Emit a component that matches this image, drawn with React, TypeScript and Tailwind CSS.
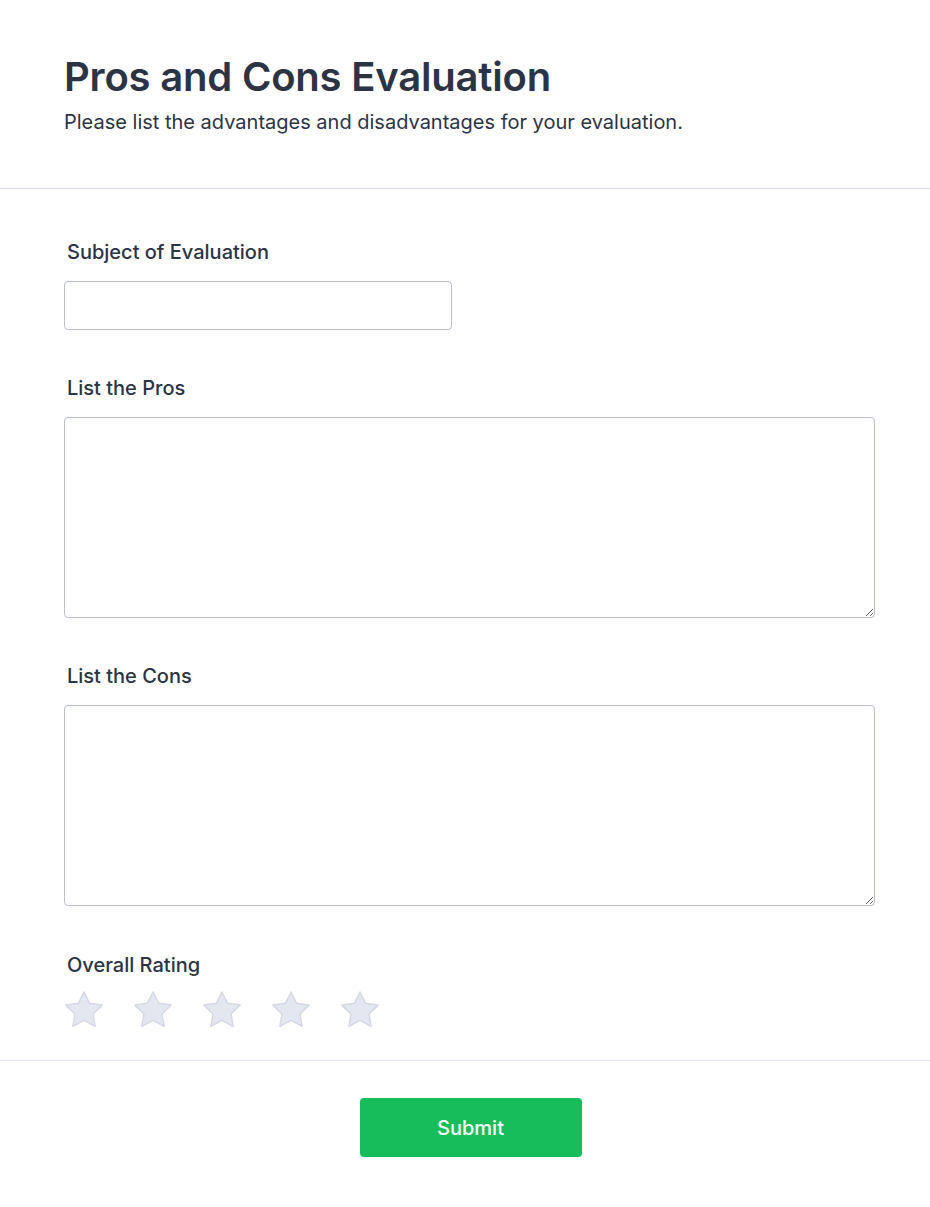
import React from "react";

const Star = () => (
  <svg width="46" height="46" viewBox="0 0 24 24" className="block">
    <path
      d="M12 2.6l2.9 5.9 6.5.95-4.7 4.6 1.1 6.45L12 17.45l-5.8 3.05 1.1-6.45-4.7-4.6 6.5-.95z"
      fill="#e5e7f0"
      stroke="#d6d9e4"
      strokeWidth="0.8"
      strokeLinejoin="round"
    />
  </svg>
);

export default function App() {
  return (
    <div className="min-h-[1207px] bg-white text-[#2c3345]" style={{ fontFamily: "Inter, 'Noto Sans', sans-serif" }}>
      <div className="px-16 pt-[52px] pb-[54px] border-b border-[#dadaea]">
        <h1 className="text-[40px] leading-[50px] font-semibold tracking-[-0.2px]">Pros and Cons Evaluation</h1>
        <p className="text-[20px] leading-[24px] mt-[8px]">Please list the advantages and disadvantages for your evaluation.</p>
      </div>
      <div className="px-16 pt-[50px] pb-[27px] border-b border-[#e3e3ee]">
        <label className="block pl-[3px] text-[20px] leading-[26px] font-medium">Subject of Evaluation</label>
        <input className="mt-[16px] block w-[388px] h-[49px] rounded-[4px] border border-[#b8bccb] bg-white outline-none" />
        <label className="block pl-[3px] mt-[45px] text-[20px] leading-[26px] font-medium">List the Pros</label>
        <textarea className="mt-[16px] block w-[811px] h-[201px] rounded-[4px] border border-[#b8bccb] bg-white outline-none" />
        <label className="block pl-[3px] mt-[45px] text-[20px] leading-[26px] font-medium">List the Cons</label>
        <textarea className="mt-[16px] block w-[811px] h-[201px] rounded-[4px] border border-[#b8bccb] bg-white outline-none" />
        <label className="block pl-[3px] mt-[46px] text-[20px] leading-[26px] font-medium">Overall Rating</label>
        <div className="mt-[9px] -ml-[3px] flex gap-[23px]">
          <Star />
          <Star />
          <Star />
          <Star />
          <Star />
        </div>
      </div>
      <div className="flex justify-center pt-[37px] pl-[11px]">
        <button className="w-[222px] h-[59px] rounded-[4px] bg-[#18bd5b] text-white text-[20px] font-medium">Submit</button>
      </div>
    </div>
  );
}
